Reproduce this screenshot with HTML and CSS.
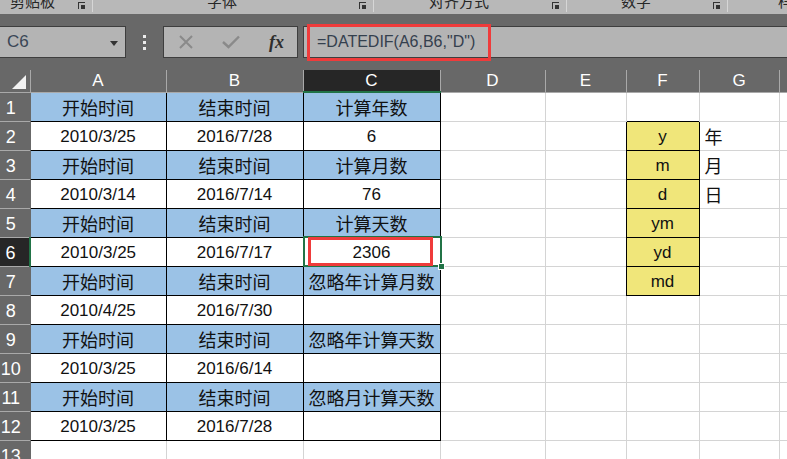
FILE: index.html
```html
<!DOCTYPE html>
<html lang="zh-CN">
<head>
  <meta charset="UTF-8">
  <title>DATEDIF</title>
  <link rel="stylesheet" href="styles.css">
</head>
<body>

  <!-- ribbon group labels (cut off at top) -->
  <div class="ribbon">
    <div class="group g1"><span class="glabel">剪贴板</span><i class="launch"></i></div>
    <div class="group g2"><span class="glabel">字体</span><i class="launch"></i></div>
    <div class="group g3"><span class="glabel">对齐方式</span><i class="launch"></i></div>
    <div class="group g4"><span class="glabel">数字</span><i class="launch"></i></div>
    <div class="group g5"><span class="glabel">样式</span></div>
  </div>

  <!-- name box + formula bar -->
  <div class="formula-row">
    <div class="namebox"><span>C6</span><i class="caret"></i></div>
    <div class="dots"><i></i><i></i><i></i></div>
    <div class="fbuttons">
      <svg class="ico" width="16" height="16" viewBox="0 0 16 16"><path d="M2 2 L14 14 M14 2 L2 14" stroke="#8a8a8a" stroke-width="2" fill="none"/></svg>
      <svg class="ico" width="18" height="14" viewBox="0 0 18 14"><path d="M1 7 L6.5 12 L17 1.5" stroke="#8a8a8a" stroke-width="2.4" fill="none"/></svg>
      <span class="fx">fx</span>
    </div>
    <div class="formula">
      <span class="ftext">=DATEDIF(A6,B6,"D")</span>
      <div class="mark-formula"></div>
    </div>
  </div>

  <table class="sheet">
    <colgroup>
      <col class="c-rh"><col class="c-a"><col class="c-b"><col class="c-c"><col class="c-d"><col class="c-e"><col class="c-f"><col class="c-g"><col class="c-h">
    </colgroup>
    <tr class="colhead">
      <th class="corner"><i class="tri"></i></th>
      <th>A</th><th>B</th><th class="selcol">C</th><th>D</th><th>E</th><th>F</th><th>G</th><th></th>
    </tr>
    <tr>
      <th class="rh">1</th>
      <td class="b blue cn">开始时间</td><td class="b blue cn">结束时间</td><td class="b blue cn">计算年数</td>
      <td></td><td></td><td></td><td></td><td></td>
    </tr>
    <tr>
      <th class="rh">2</th>
      <td class="b">2010/3/25</td><td class="b">2016/7/28</td><td class="b">6</td>
      <td></td><td></td><td class="b yellow">y</td><td class="cn left">年</td><td></td>
    </tr>
    <tr>
      <th class="rh">3</th>
      <td class="b blue cn">开始时间</td><td class="b blue cn">结束时间</td><td class="b blue cn">计算月数</td>
      <td></td><td></td><td class="b yellow">m</td><td class="cn left">月</td><td></td>
    </tr>
    <tr>
      <th class="rh">4</th>
      <td class="b">2010/3/14</td><td class="b">2016/7/14</td><td class="b">76</td>
      <td></td><td></td><td class="b yellow">d</td><td class="cn left">日</td><td></td>
    </tr>
    <tr>
      <th class="rh">5</th>
      <td class="b blue cn">开始时间</td><td class="b blue cn">结束时间</td><td class="b blue cn">计算天数</td>
      <td></td><td></td><td class="b yellow">ym</td><td></td><td></td>
    </tr>
    <tr>
      <th class="rh selrow">6</th>
      <td class="b">2010/3/25</td><td class="b">2016/7/17</td>
      <td class="b active">2306<span class="selbox"></span><span class="handle"></span><span class="mark-cell"></span></td>
      <td></td><td></td><td class="b yellow">yd</td><td></td><td></td>
    </tr>
    <tr>
      <th class="rh">7</th>
      <td class="b blue cn">开始时间</td><td class="b blue cn">结束时间</td><td class="b blue cn">忽略年计算月数</td>
      <td></td><td></td><td class="b yellow">md</td><td></td><td></td>
    </tr>
    <tr>
      <th class="rh">8</th>
      <td class="b">2010/4/25</td><td class="b">2016/7/30</td><td class="b"></td>
      <td></td><td></td><td></td><td></td><td></td>
    </tr>
    <tr>
      <th class="rh">9</th>
      <td class="b blue cn">开始时间</td><td class="b blue cn">结束时间</td><td class="b blue cn">忽略年计算天数</td>
      <td></td><td></td><td></td><td></td><td></td>
    </tr>
    <tr>
      <th class="rh">10</th>
      <td class="b">2010/3/25</td><td class="b">2016/6/14</td><td class="b"></td>
      <td></td><td></td><td></td><td></td><td></td>
    </tr>
    <tr>
      <th class="rh">11</th>
      <td class="b blue cn">开始时间</td><td class="b blue cn">结束时间</td><td class="b blue cn">忽略月计算天数</td>
      <td></td><td></td><td></td><td></td><td></td>
    </tr>
    <tr>
      <th class="rh">12</th>
      <td class="b">2010/3/25</td><td class="b">2016/7/28</td><td class="b"></td>
      <td></td><td></td><td></td><td></td><td></td>
    </tr>
    <tr>
      <th class="rh">13</th>
      <td></td><td></td><td></td><td></td><td></td><td></td><td></td><td></td>
    </tr>
  </table>

</body>
</html>
```

FILE: styles.css
```css
body {
  margin: 0;
  width: 787px;
  height: 459px;
  overflow: hidden;
  background: #686868;
  font-family: "Liberation Sans", "Noto Sans CJK SC", sans-serif;
}

/* ribbon labels */
.ribbon {
  display: flex;
  height: 14px;
  background: #b8b8b8;
  overflow: hidden;
}
.group {
  display: flex;
  flex-shrink: 0;
  align-items: flex-start;
  border-right: 1px solid #d6d6d6;
  height: 12px;
}
.g1 { width: 92px; }
.g2 { width: 280px; }
.g3 { width: 192px; }
.g4 { width: 160px; }
.g5 { flex: 1 1 auto; min-width: 0; overflow: hidden; border-right: none; height: 14px; }
.glabel {
  flex: 1;
  text-align: center;
  padding-right: 8px;
  font-family: "Noto Sans CJK SC", sans-serif;
  font-size: 15px;
  line-height: 15px;
  margin-top: -7px;
  color: #262626;
  white-space: nowrap;
}
.g1 .glabel { text-align: left; padding-left: 10px; }
.g5 .glabel { flex: none; text-align: left; padding-left: 50px; }
.launch {
  width: 6px;
  height: 6px;
  margin: 2px 7px 0 0;
  border-left: 1px solid #333;
  border-top: 1px solid #333;
  position: relative;
}
.launch::after {
  content: "";
  position: absolute;
  left: 2px;
  top: 2px;
  width: 4px;
  height: 4px;
  background: #333;
}

/* formula bar */
.formula-row {
  display: flex;
  align-items: flex-start;
  height: 44px;
  padding-top: 12px;
}
.namebox {
  box-sizing: border-box;
  width: 126px;
  height: 32px;
  background: #b4b4b4;
  border: 1px solid #3e3e3e;
  border-left: none;
  display: flex;
  align-items: center;
  justify-content: space-between;
  padding: 0 7px;
  font-size: 17px;
  color: #3a4656;
}
.caret {
  width: 0;
  height: 0;
  border-left: 4px solid transparent;
  border-right: 4px solid transparent;
  border-top: 5px solid #333;
  margin-top: 2px;
}
.dots {
  display: flex;
  flex-direction: column;
  gap: 3px;
  margin: 9px 0 0 17px;
}
.dots i {
  width: 3px;
  height: 3px;
  background: #ececec;
}
.fbuttons {
  box-sizing: border-box;
  width: 135px;
  height: 32px;
  margin-left: 17px;
  background: #b4b4b4;
  border: 1px solid #3e3e3e;
  display: flex;
  align-items: center;
  padding: 0 12px 0 14px;
  gap: 28px;
}
.ico { display: block; }
.fx {
  font-family: "Liberation Serif", serif;
  font-style: italic;
  font-weight: bold;
  font-size: 18px;
  color: #2e2e2e;
  margin-left: 1px;
}
.formula {
  position: relative;
  box-sizing: border-box;
  flex: 1;
  height: 32px;
  margin-left: 5px;
  background: #b4b4b4;
  border: 1px solid #3e3e3e;
  border-right: none;
  display: flex;
  align-items: center;
  padding-left: 13px;
  font-size: 16px;
  color: #34404e;
}
.mark-formula {
  position: absolute;
  left: 3px;
  top: -3px;
  width: 184px;
  height: 37px;
  border: 3px solid #ef3b3b;
  box-sizing: border-box;
}

/* sheet */
.sheet {
  table-layout: fixed;
  width: 787px;
  border-collapse: collapse;
  background: #fff;
}
.c-rh { width: 30px; }
.c-a { width: 136px; }
.c-b { width: 137px; }
.c-c { width: 137px; }
.c-d { width: 105px; }
.c-e { width: 81px; }
.c-f { width: 73px; }
.c-g { width: 80px; }
.c-h { width: 8px; }

.sheet tr { height: 29px; }
.sheet tr.colhead { height: 22px; }
.sheet th {
  background: #686868;
  color: #fff;
  font-weight: normal;
  padding: 0;
}
.colhead th {
  font-size: 17px;
  border-left: 1px solid #a9a9a9;
  border-bottom: 1px solid #a9a9a9;
}
.colhead th.corner { border-left: none; position: relative; }
.colhead th.selcol {
  background: #262626;
  border-bottom: 2px solid #217346;
}
.tri {
  position: absolute;
  right: 4px;
  bottom: 3px;
  width: 0;
  height: 0;
  border-left: 14px solid transparent;
  border-bottom: 14px solid #f2f2f2;
}
.rh {
  font-size: 18px;
  text-align: center;
  padding-right: 8px !important;
  padding-top: 3px !important;
  border-top: 1px solid #a9a9a9;
  border-right: 1px solid #686868;
}
.rh.selrow {
  background: #262626;
  border-right: 2px solid #217346;
}

.sheet td {
  padding: 3px 0 0;
  text-align: center;
  font-size: 17px;
  color: #111;
  white-space: nowrap;
  overflow: hidden;
  border-left: 1px solid #d4d4d4;
  border-top: 1px solid #d4d4d4;
}
.sheet td.b { border: 1px solid #000; }
.sheet td.cn {
  font-family: "Noto Sans CJK SC", sans-serif;
  font-size: 18px;
  padding-top: 1px;
}
.sheet td.left { text-align: left; padding-left: 5px; }
.blue { background: #9bc2e6; }
.yellow { background: #f0e67a; }

.sheet td.active { position: relative; overflow: visible; }
.selbox {
  position: absolute;
  left: -1px;
  top: -2px;
  right: -2px;
  bottom: -1px;
  border: 2px solid #217346;
}
.handle {
  position: absolute;
  right: -5px;
  bottom: -4px;
  width: 5px;
  height: 5px;
  background: #217346;
  border: 1px solid #fff;
}
.mark-cell {
  position: absolute;
  left: 4px;
  top: -1px;
  right: 7px;
  bottom: 0;
  border: 3px solid #ef3b3b;
}
```
